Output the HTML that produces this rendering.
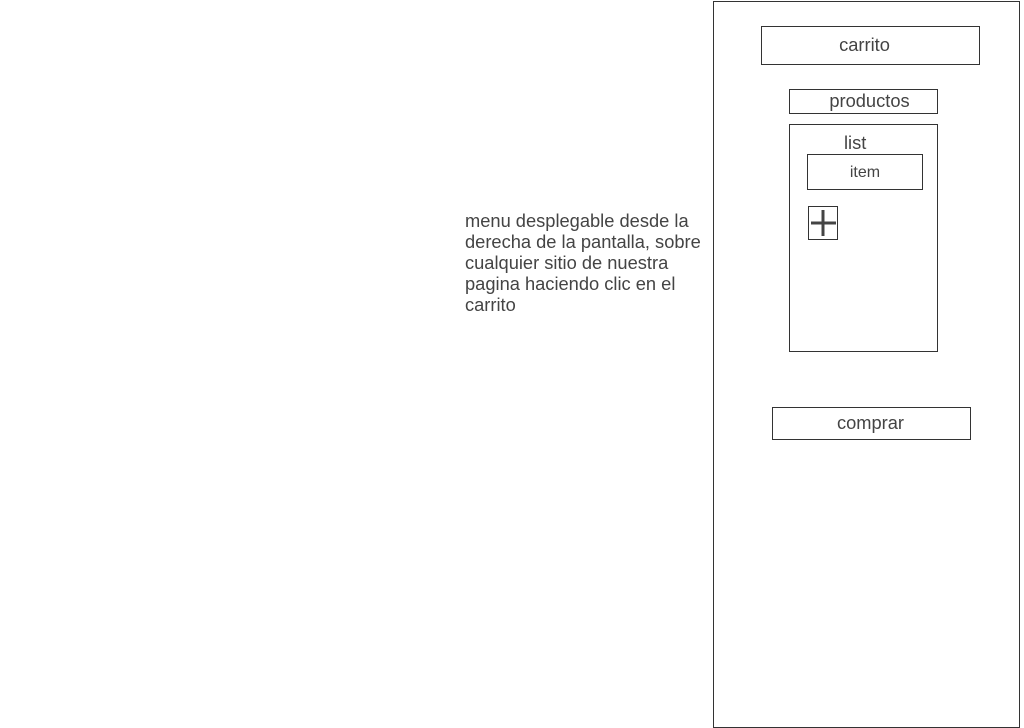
<!DOCTYPE html>
<html><head><style>
body{margin:0;width:1024px;height:728px;background:#fff;font-family:"Liberation Sans",sans-serif;color:#444;position:relative;overflow:hidden}
.b{position:absolute;border:1px solid #333;box-sizing:border-box;display:flex;align-items:center;justify-content:center;font-size:18.3px}
.t{position:absolute;font-size:18.3px;line-height:21px;white-space:nowrap}
</style></head><body>
<div class="b" style="left:713px;top:1px;width:307px;height:727px"></div>
<div class="b" style="left:761px;top:26px;width:219px;height:39px;padding-right:12px;padding-bottom:2px">carrito</div>
<div class="b" style="left:789px;top:89px;width:149px;height:25px;padding-left:12px;padding-bottom:2px">productos</div>
<div class="b" style="left:789px;top:124px;width:149px;height:228px"></div>
<div class="t" style="left:844px;top:132px">list</div>
<div class="b" style="left:807px;top:154px;width:116px;height:36px;font-size:16px;padding-top:1px">item</div>
<div class="b" style="left:808px;top:206px;width:30px;height:34px">
<svg width="30" height="34" style="position:absolute;left:-1px;top:-1px"><path d="M15 4V30M3 17H28" stroke="#444" stroke-width="3"/></svg></div>
<div class="b" style="left:772px;top:407px;width:199px;height:33px;padding-right:2px;padding-bottom:2px">comprar</div>
<div class="t" style="left:465px;top:210px">menu desplegable desde la<br>derecha de la pantalla, sobre<br>cualquier sitio de nuestra<br>pagina haciendo clic en el<br>carrito</div>
</body></html>
